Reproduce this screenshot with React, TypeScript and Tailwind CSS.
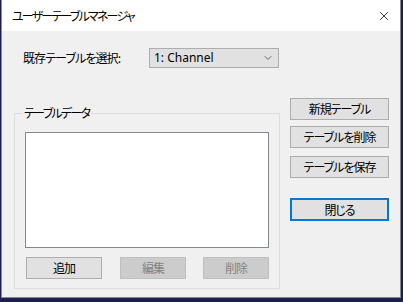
import { ChevronDown, X } from "lucide-react";

const jp = {
  fontFamily: '"Noto Sans CJK JP", "Noto Sans", sans-serif',
  fontFeatureSettings: '"palt"',
};

const Btn = ({
  label,
  w,
  disabled,
  focused,
}: {
  label: string;
  w: string;
  disabled?: boolean;
  focused?: boolean;
}) => (
  <div
    className={`${w} flex items-center justify-center text-[12px] leading-none tracking-[-1px] ${
      focused
        ? "h-[23px] border-2 border-[#0078d7] bg-[#e1e1e1] text-black"
        : disabled
          ? "h-[22px] border border-[#bfbfbf] bg-[#cccccc] text-[#838383]"
          : "h-[22px] border border-[#adadad] bg-[#e1e1e1] text-black"
    }`}
  >
    {label}
  </div>
);

export default function App() {
  return (
    <div className="w-[403px] h-[302px] bg-[#1c2050] pl-[1px] overflow-hidden" style={jp}>
      <div className="w-[400px] h-[298px] flex flex-col border border-[#8a8a8a] border-t-0 bg-[#f0f0f0]">
        {/* Title bar */}
        <div className="h-[31px] bg-white flex items-center justify-between pl-[10px] pr-[9px]">
          <span className="text-[12px] text-black tracking-[-1.8px]">ユーザーテーブルマネージャ</span>
          <X className="w-[14px] h-[14px] text-black" strokeWidth={1.3} />
        </div>

        <div className="flex flex-col pl-[12px]">
          {/* Selector row */}
          <div className="flex items-center mt-[17px] h-[20px]">
            <span className="ml-[9px] w-[126px] text-[12px] text-black tracking-[-0.9px]">既存テーブルを選択:</span>
            <div className="w-[130px] h-[20px] border border-[#adadad] bg-[#e1e1e1] flex items-center justify-between pl-[4px] pr-[4px]">
              <span className="text-[12px] text-black" style={{ fontFamily: '"Noto Sans", sans-serif' }}>
                1: Channel
              </span>
              <ChevronDown className="w-[12px] h-[12px] text-[#444]" strokeWidth={1.5} />
            </div>
          </div>

          <div className="flex mt-[30px]">
            {/* Group box */}
            <div className="w-[266px] mt-[15px] h-[176px] relative border border-[#dcdcdc] pl-[10px] pt-[18px]">
              <span className="absolute -top-[9px] left-[7px] bg-[#f0f0f0] px-[2px] text-[12px] text-black leading-[16px] tracking-[-1.7px]">
                テーブルデータ
              </span>
              <div className="w-[244px] h-[116px] bg-white border border-[#828790]" />
              <div className="flex mt-[9px] pl-[1px]">
                <Btn label="追加" w="w-[76px]" />
                <div className="ml-[18px]">
                  <Btn label="編集" w="w-[66px]" disabled />
                </div>
                <div className="ml-[17px]">
                  <Btn label="削除" w="w-[66px]" disabled />
                </div>
              </div>
            </div>

            {/* Right buttons */}
            <div className="ml-[10px] flex flex-col">
              <Btn label="新規テーブル" w="w-[99px]" />
              <div className="mt-[6px]">
                <Btn label="テーブルを削除" w="w-[99px]" />
              </div>
              <div className="mt-[8px]">
                <Btn label="テーブルを保存" w="w-[99px]" />
              </div>
              <div className="mt-[20px]">
                <Btn label="閉じる" w="w-[99px]" focused />
              </div>
            </div>
          </div>
        </div>
      </div>
    </div>
  );
}
